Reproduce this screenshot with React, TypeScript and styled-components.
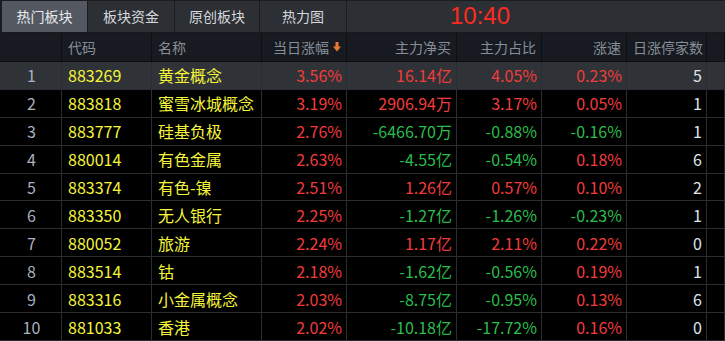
import React from 'react';
import styled, { createGlobalStyle } from 'styled-components';

const GlobalStyle = createGlobalStyle`
  html, body {
    margin: 0;
    padding: 0;
    background: #000;
  }
  body {
    font-family: "Noto Sans CJK SC", "Noto Sans", sans-serif;
  }
`;

type Tone = 'up' | 'down' | 'plain';

interface RowData {
  code: string;
  name: string;
  pct: string;
  net: string;
  netTone: Tone;
  ratio: string;
  ratioTone: Tone;
  speed: string;
  speedTone: Tone;
  limit: number;
}

const rows: RowData[] = [
  { code: '883269', name: '黄金概念', pct: '3.56%', net: '16.14亿', netTone: 'up', ratio: '4.05%', ratioTone: 'up', speed: '0.23%', speedTone: 'up', limit: 5 },
  { code: '883818', name: '蜜雪冰城概念', pct: '3.19%', net: '2906.94万', netTone: 'up', ratio: '3.17%', ratioTone: 'up', speed: '0.05%', speedTone: 'up', limit: 1 },
  { code: '883777', name: '硅基负极', pct: '2.76%', net: '-6466.70万', netTone: 'down', ratio: '-0.88%', ratioTone: 'down', speed: '-0.16%', speedTone: 'down', limit: 1 },
  { code: '880014', name: '有色金属', pct: '2.63%', net: '-4.55亿', netTone: 'down', ratio: '-0.54%', ratioTone: 'down', speed: '0.18%', speedTone: 'up', limit: 6 },
  { code: '883374', name: '有色-镍', pct: '2.51%', net: '1.26亿', netTone: 'up', ratio: '0.57%', ratioTone: 'up', speed: '0.10%', speedTone: 'up', limit: 2 },
  { code: '883350', name: '无人银行', pct: '2.25%', net: '-1.27亿', netTone: 'down', ratio: '-1.26%', ratioTone: 'down', speed: '-0.23%', speedTone: 'down', limit: 1 },
  { code: '880052', name: '旅游', pct: '2.24%', net: '1.17亿', netTone: 'up', ratio: '2.11%', ratioTone: 'up', speed: '0.22%', speedTone: 'up', limit: 0 },
  { code: '883514', name: '钴', pct: '2.18%', net: '-1.62亿', netTone: 'down', ratio: '-0.56%', ratioTone: 'down', speed: '0.19%', speedTone: 'up', limit: 1 },
  { code: '883316', name: '小金属概念', pct: '2.03%', net: '-8.75亿', netTone: 'down', ratio: '-0.95%', ratioTone: 'down', speed: '0.13%', speedTone: 'up', limit: 6 },
  { code: '881033', name: '香港', pct: '2.02%', net: '-10.18亿', netTone: 'down', ratio: '-17.72%', ratioTone: 'down', speed: '0.16%', speedTone: 'up', limit: 0 },
];

const toneColor: Record<Tone, string> = {
  up: '#f23c3c',
  down: '#2bbd4e',
  plain: '#dfe4ea',
};

const Screen = styled.div`
  width: 725px;
  height: 341px;
  background: #000;
  overflow: hidden;
  display: flex;
  flex-direction: column;
`;

const TabBar = styled.div`
  height: 31px;
  display: flex;
  align-items: stretch;
  background: #2c2f34;
  border-top: 1px solid #1a1c20;
  border-left: 2px solid #1a1c20;
  border-bottom: 1px solid #15171b;
`;

const Tab = styled.div<{ $active?: boolean; $w: number }>`
  width: ${(p) => p.$w}px;
  display: flex;
  align-items: center;
  justify-content: center;
  font-size: 14px;
  color: ${(p) => (p.$active ? '#e6e9ee' : '#d5d8dd')};
  background: ${(p) => (p.$active ? '#545961' : '#2c2f34')};
  border-right: 1px solid #1a1c20;
  box-sizing: border-box;
`;

const Clock = styled.div`
  margin-left: 103px;
  font-family: "Liberation Sans", Arial, sans-serif;
  font-size: 24px;
  color: #ff2a22;
  display: flex;
  align-items: center;
  padding-bottom: 1px;
`;

const cols = '62px 90px 110px 85px 110px 85px 85px 80px 1fr';

const HeaderRow = styled.div`
  display: grid;
  grid-template-columns: ${cols};
  height: 29px;
  background: #171b21;
  border-bottom: 1px solid #0c0e11;
  box-sizing: border-box;
`;

const HeadCell = styled.div<{ $align?: 'left' | 'right' }>`
  display: flex;
  align-items: center;
  justify-content: ${(p) => (p.$align === 'left' ? 'flex-start' : 'flex-end')};
  padding: 0 5px 0 6px;
  font-size: 14px;
  color: #878e98;
  border-right: 1px solid #0c0e11;
  white-space: nowrap;
  gap: 4px;
`;

const Row = styled.div<{ $selected?: boolean }>`
  display: grid;
  grid-template-columns: ${cols};
  height: 28px;
  background: ${(p) => (p.$selected ? '#2f3236' : '#000')};
  border-bottom: 1px solid #2a2d33;
  box-sizing: border-box;
`;

const Cell = styled.div<{ $align?: 'left' | 'right' | 'center'; $color?: string }>`
  display: flex;
  align-items: center;
  justify-content: ${(p) =>
    p.$align === 'left' ? 'flex-start' : p.$align === 'center' ? 'center' : 'flex-end'};
  padding: 0 4px 0 6px;
  font-size: 16px;
  color: ${(p) => p.$color || '#dfe4ea'};
  border-right: 1px solid #2a2d33;
  white-space: nowrap;
  overflow: hidden;
`;

const SortArrow = () => (
  <svg width="8" height="10" viewBox="0 0 8 10">
    <rect x="2.5" y="0" width="3" height="5" fill="#ec7a2c" />
    <polygon points="0,4.5 8,4.5 4,9.5" fill="#ec7a2c" />
  </svg>
);

const App: React.FC = () => {
  return (
    <Screen>
      <GlobalStyle />
      <TabBar>
        <Tab $active $w={86}>热门板块</Tab>
        <Tab $w={87}>板块资金</Tab>
        <Tab $w={85}>原创板块</Tab>
        <Tab $w={87}>热力图</Tab>
        <Clock>10:40</Clock>
      </TabBar>
      <HeaderRow>
        <HeadCell />
        <HeadCell $align="left">代码</HeadCell>
        <HeadCell $align="left">名称</HeadCell>
        <HeadCell>
          当日涨幅
          <SortArrow />
        </HeadCell>
        <HeadCell>主力净买</HeadCell>
        <HeadCell>主力占比</HeadCell>
        <HeadCell>涨速</HeadCell>
        <HeadCell $align="left">日涨停家数</HeadCell>
        <HeadCell />
      </HeaderRow>
      {rows.map((r, i) => (
        <Row key={r.code} $selected={i === 0}>
          <Cell $align="center" $color="#a9b1bd">{i + 1}</Cell>
          <Cell $align="left" $color="#f5f53a">{r.code}</Cell>
          <Cell $align="left" $color="#f5f53a">{r.name}</Cell>
          <Cell $color={toneColor.up}>{r.pct}</Cell>
          <Cell $color={toneColor[r.netTone]}>{r.net}</Cell>
          <Cell $color={toneColor[r.ratioTone]}>{r.ratio}</Cell>
          <Cell $color={toneColor[r.speedTone]}>{r.speed}</Cell>
          <Cell $color={toneColor.plain}>{r.limit}</Cell>
          <Cell />
        </Row>
      ))}
    </Screen>
  );
};

export default App;
